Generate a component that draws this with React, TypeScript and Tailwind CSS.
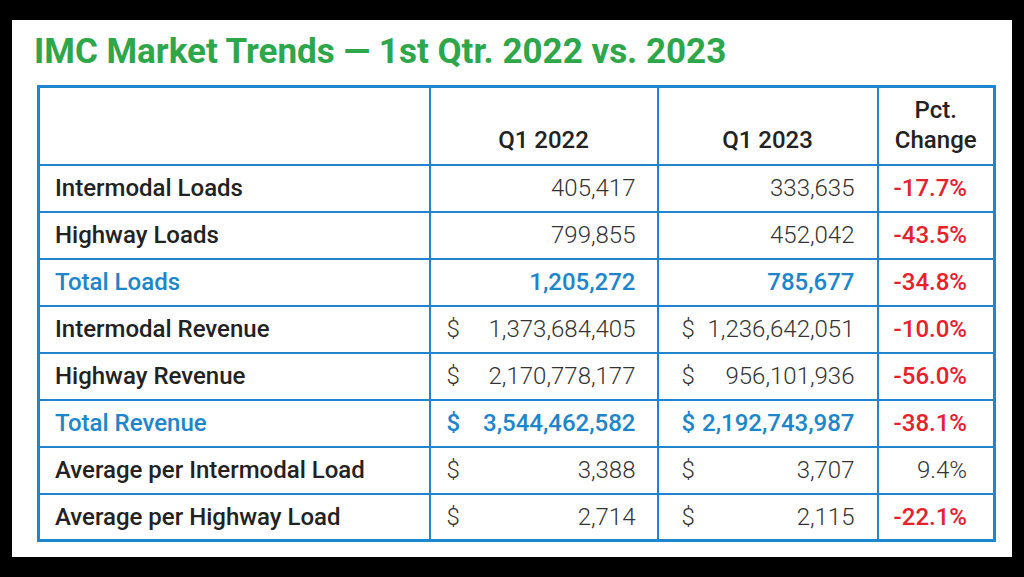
const rows = [
  { label: "Intermodal Loads", a: "405,417", b: "333,635", pct: "-17.7%" },
  { label: "Highway Loads", a: "799,855", b: "452,042", pct: "-43.5%" },
  { label: "Total Loads", a: "1,205,272", b: "785,677", pct: "-34.8%", total: true },
  { label: "Intermodal Revenue", a: "1,373,684,405", b: "1,236,642,051", pct: "-10.0%", dollar: true },
  { label: "Highway Revenue", a: "2,170,778,177", b: "956,101,936", pct: "-56.0%", dollar: true },
  { label: "Total Revenue", a: "3,544,462,582", b: "2,192,743,987", pct: "-38.1%", dollar: true, total: true },
  { label: "Average per Intermodal Load", a: "3,388", b: "3,707", pct: "9.4%", dollar: true },
  { label: "Average per Highway Load", a: "2,714", b: "2,115", pct: "-22.1%", dollar: true },
];

function Money({ value, dollar }: { value: string; dollar?: boolean }) {
  return (
    <div className="flex justify-between items-center">
      <span>{dollar ? "$" : ""}</span>
      <span>{value}</span>
    </div>
  );
}

export default function App() {
  return (
    <div className="w-[1024px] h-[577px] bg-black pt-[20px] pl-[12px]" style={{ fontFamily: "Roboto, 'Liberation Sans', sans-serif" }}>
      <div className="w-[1000px] h-[537px] bg-white pt-[13px] pl-[25px]">
        {/* Title */}
        <h1 className="text-[35px] leading-[38px] font-bold text-[#2ea64a] -ml-[3px]">
          IMC Market Trends — 1st Qtr. 2022 vs. 2023
        </h1>

        {/* Table */}
        <table className="mt-[14px] border-collapse border-[3px] border-[#1d86cf] table-fixed w-[956px]">
          <colgroup>
            <col className="w-[391px]" />
            <col className="w-[228px]" />
            <col className="w-[220px]" />
            <col className="w-[117px]" />
          </colgroup>
          <thead>
            <tr className="h-[78px] text-[24px] font-medium text-[#222] leading-[30px]">
              <th className="border-2 border-[#1d86cf]"></th>
              <th className="border-2 border-[#1d86cf] align-bottom pb-[9px] font-medium">Q1 2022</th>
              <th className="border-2 border-[#1d86cf] align-bottom pb-[9px] font-medium">Q1 2023</th>
              <th className="border-2 border-[#1d86cf] align-bottom pb-[9px] font-medium">
                Pct.
                <br />
                Change
              </th>
            </tr>
          </thead>
          <tbody>
            {rows.map((r) => (
              <tr key={r.label} className="h-[47px] leading-[28px]">
                <td
                  className={
                    "border-2 border-[#1d86cf] pl-[15px] text-[24px] font-medium " +
                    (r.total ? "text-[#1b86cc]" : "text-[#222]")
                  }
                >
                  {r.label}
                </td>
                <td
                  className={
                    "border-2 border-[#1d86cf] pl-[16px] pr-[21px] text-[24px] " +
                    (r.total ? "text-[#1b86cc] font-medium" : "text-[#333] font-light")
                  }
                >
                  <Money value={r.a} dollar={r.dollar} />
                </td>
                <td
                  className={
                    "border-2 border-[#1d86cf] pl-[23px] pr-[22px] text-[24px] " +
                    (r.total ? "text-[#1b86cc] font-medium" : "text-[#333] font-light")
                  }
                >
                  <Money value={r.b} dollar={r.dollar} />
                </td>
                <td
                  className={
                    "border-2 border-[#1d86cf] pr-[26px] text-right text-[24px] " +
                    (r.pct.startsWith("-") ? "text-[#e8202a] font-medium" : "text-[#333] font-light")
                  }
                >
                  {r.pct}
                </td>
              </tr>
            ))}
          </tbody>
        </table>
      </div>
    </div>
  );
}
